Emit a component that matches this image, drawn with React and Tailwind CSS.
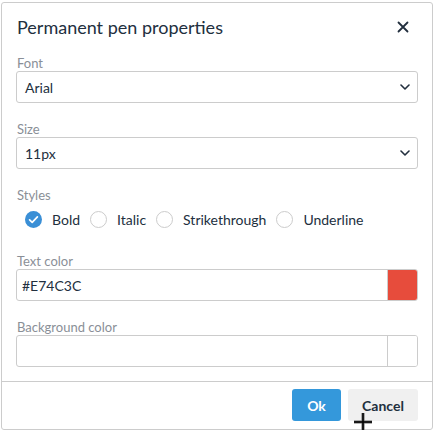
import React, { useState } from 'react';

const Chevron = () => (
  <svg width="10" height="6" viewBox="0 0 10 6" className="shrink-0">
    <path d="M1 1l4 4 4-4" fill="none" stroke="#222f3e" strokeWidth="1.6" strokeLinecap="round" strokeLinejoin="round" />
  </svg>
);

const Label = ({ children }) => (
  <div className="h-[16px] pl-px text-[13px] leading-[16px] text-[#8a8f97]">{children}</div>
);

const SelectBox = ({ value }) => (
  <div className="flex h-[32px] items-center justify-between rounded-[3px] border border-[#cccccc] pl-[8px] pr-[7px] text-[14px] text-[#222f3e]">
    <span>{value}</span>
    <Chevron />
  </div>
);

const ColorInput = ({ value, swatch }) => (
  <div className="flex h-[32px] rounded-[3px] border border-[#cccccc]">
    <div className="flex flex-1 items-center pl-[5px] text-[14px] text-[#222f3e]">{value}</div>
    <div className={`w-[30px] rounded-r-[2px] border-l border-[#cccccc] ${swatch ? 'bg-[#e74c3c]' : 'bg-white'}`} />
  </div>
);

const Check = ({ checked, label }) => (
  <div className="flex items-center gap-[10px]">
    {checked ? (
      <svg width="17" height="17" viewBox="0 0 17 17">
        <circle cx="8.5" cy="8.5" r="8.5" fill="#3a8fd6" />
        <path d="M4.6 8.8l2.6 2.5 5.2-5.4" fill="none" stroke="#fff" strokeWidth="1.7" strokeLinecap="round" strokeLinejoin="round" />
      </svg>
    ) : (
      <span className="h-[17px] w-[17px] rounded-full border border-[#cccccc] bg-white" />
    )}
    <span>{label}</span>
  </div>
);

export default function App() {
  const [styles] = useState({ bold: true, italic: false, strike: false, underline: false });

  return (
    <div
      className="relative h-[430px] w-[435px] overflow-hidden bg-white"
      style={{ fontFamily: 'Lato, "Noto Sans", sans-serif' }}
    >
      <div className="ml-px mt-[2px] flex h-[428px] w-[432px] flex-col rounded-[3px] border border-[#cccccc] bg-white">
        <div className="flex items-center justify-between pl-[15px] pr-[23px] pt-[12px] pb-[16px]">
          <h1 className="text-[18px] leading-[24px] text-[#222f3e]">Permanent pen properties</h1>
          <svg width="12" height="12" viewBox="0 0 12 12">
            <path d="M1.5 1.5l9 9M10.5 1.5l-9 9" stroke="#222f3e" strokeWidth="1.8" strokeLinecap="round" />
          </svg>
        </div>

        <div className="flex flex-col gap-[18px] px-[14px] pb-[14px]">
          <div>
            <Label>Font</Label>
            <SelectBox value="Arial" />
          </div>
          <div>
            <Label>Size</Label>
            <SelectBox value="11px" />
          </div>
          <div>
            <Label>Styles</Label>
            <div className="flex h-[32px] items-center gap-[10px] pl-[9px] text-[14px] text-[#222f3e]">
              <Check checked={styles.bold} label="Bold" />
              <Check checked={styles.italic} label="Italic" />
              <Check checked={styles.strike} label="Strikethrough" />
              <Check checked={styles.underline} label="Underline" />
            </div>
          </div>
          <div>
            <Label>Text color</Label>
            <ColorInput value="#E74C3C" swatch />
          </div>
          <div>
            <Label>Background color</Label>
            <ColorInput value="" />
          </div>
        </div>

        <div className="flex flex-1 items-start justify-end gap-[7px] border-t border-[#cccccc] px-[14px] pt-[7px]">
          <button className="h-[32px] w-[49px] rounded-[3px] bg-[#3498db] text-[14px] font-bold text-white">Ok</button>
          <button className="h-[32px] w-[70px] rounded-[3px] bg-[#f0f0f0] text-[14px] font-bold text-[#222f3e]">Cancel</button>
        </div>
      </div>

      <svg className="pointer-events-none absolute left-[353px] top-[412px]" width="20" height="18" viewBox="0 0 20 18">
        <path d="M10 1v17M1 10h18" stroke="#666" strokeWidth="3" />
        <path d="M10 1v17M1 10h18" stroke="#000" strokeWidth="1.5" />
      </svg>
    </div>
  );
}
